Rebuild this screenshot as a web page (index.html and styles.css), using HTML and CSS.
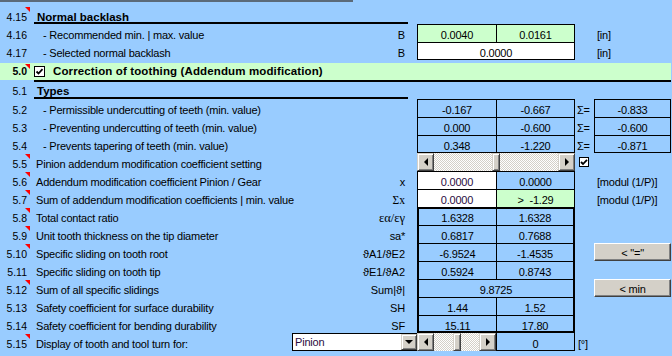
FILE: index.html
```html
<!DOCTYPE html>
<html>
<head>
<meta charset="utf-8">
<link rel="stylesheet" href="styles.css">
</head>
<body>
<div class="sheet">
  <div class="topbar"></div>

  <div class="row hdr">
    <div class="num"><i class="cm"></i>4.15</div>
    <div class="lab ul">Normal backlash</div>
  </div>
  <div class="row">
    <div class="num">4.16</div>
    <div class="lab"><span class="ind">- Recommended min. | max. value</span><span class="sym">B</span></div>
    <div class="c1 v g">0.0040</div>
    <div class="c2 v g r">0.0161</div>
    <div class="c3 unit">[in]</div>
  </div>
  <div class="row">
    <div class="num">4.17</div>
    <div class="lab"><span class="ind">- Selected normal backlash</span><span class="sym">B</span></div>
    <div class="c12 v w r b">0.0000</div>
    <div class="c3 unit">[in]</div>
  </div>

  <div class="row sec">
    <div class="num"><i class="cm"></i>5.0</div>
    <div class="lab full">
      <svg class="chk" width="11" height="11" viewBox="0 0 11 11"><rect x="0.5" y="0.5" width="10" height="10" fill="#fff" stroke="#000"/><path d="M2.5 5.5 L4.5 7.5 L8.5 3.2" fill="none" stroke="#000" stroke-width="1.8"/></svg>
      <span class="sectxt">Correction of toothing (Addendum modification)</span>
    </div>
  </div>
  <div class="row hdr types">
    <div class="num">5.1</div>
    <div class="lab ul">Types</div>
  </div>

  <div class="row">
    <div class="num">5.2</div>
    <div class="lab"><span class="ind">- Permissible undercutting of teeth (min. value)</span></div>
    <div class="c1 v">-0.167</div>
    <div class="c2 v r">-0.667</div>
    <div class="cs sig">Σ=</div>
    <div class="c3 v r">-0.833</div>
  </div>
  <div class="row">
    <div class="num">5.3</div>
    <div class="lab"><span class="ind">- Preventing undercutting of teeth (min. value)</span></div>
    <div class="c1 v">0.000</div>
    <div class="c2 v r">-0.600</div>
    <div class="cs sig">Σ=</div>
    <div class="c3 v r">-0.600</div>
  </div>
  <div class="row">
    <div class="num">5.4</div>
    <div class="lab"><span class="ind">- Prevents tapering of teeth (min. value)</span></div>
    <div class="c1 v b">0.348</div>
    <div class="c2 v r b">-1.220</div>
    <div class="cs sig">Σ=</div>
    <div class="c3 v r b">-0.871</div>
  </div>

  <div class="row">
    <div class="num"><i class="cm"></i>5.5</div>
    <div class="lab"><span>Pinion addendum modification coefficient setting</span></div>
    <div class="c12 sb">
      <div class="sbb"><i class="al"></i></div>
      <div class="trk" style="width:58px"></div>
      <div class="thumb"></div>
      <div class="trk grow"></div>
      <div class="sbb"><i class="ar"></i></div>
    </div>
    <div class="cs cbx">
      <svg width="10" height="10" viewBox="0 0 10 10"><rect x="0.5" y="0.5" width="9" height="9" fill="#fff" stroke="#000"/><path d="M2 5 L4 7 L8 2.8" fill="none" stroke="#000" stroke-width="1.8"/></svg>
    </div>
  </div>

  <div class="row">
    <div class="num"><i class="cm"></i>5.6</div>
    <div class="lab"><span>Addendum modification coefficient Pinion / Gear</span><span class="sym">x</span></div>
    <div class="c1 v w inp">0.0000</div>
    <div class="c2 v r">0.0000</div>
    <div class="c3 unit">[modul (1/P)]</div>
  </div>
  <div class="row">
    <div class="num"><i class="cm"></i>5.7</div>
    <div class="lab"><span>Sum of addendum modification coefficients | min. value</span><span class="sym ser">Σx</span></div>
    <div class="c1 v w inp">0.0000</div>
    <div class="c2 v g r pre">&gt;  -1.29</div>
    <div class="c3 unit">[modul (1/P)]</div>
  </div>

  <div class="row">
    <div class="num"><i class="cm"></i>5.8</div>
    <div class="lab"><span>Total contact ratio</span><span class="sym ser big">εα/εγ</span></div>
    <div class="c1 v tt tl">1.6328</div>
    <div class="c2 v tt tr">1.6328</div>
  </div>
  <div class="row">
    <div class="num"><i class="cm"></i>5.9</div>
    <div class="lab"><span>Unit tooth thickness on the tip diameter</span><span class="sym">sa*</span></div>
    <div class="c1 v tl">0.6817</div>
    <div class="c2 v tr">0.7688</div>
  </div>
  <div class="row">
    <div class="num"><i class="cm"></i>5.10</div>
    <div class="lab"><span>Specific sliding on tooth root</span><span class="sym th">ϑA1/ϑE2</span></div>
    <div class="c1 v tl">-6.9524</div>
    <div class="c2 v tr">-1.4535</div>
    <div class="c3 btn">&lt; "="</div>
  </div>
  <div class="row">
    <div class="num">5.11</div>
    <div class="lab"><span>Specific sliding on tooth tip</span><span class="sym th">ϑE1/ϑA2</span></div>
    <div class="c1 v tl">0.5924</div>
    <div class="c2 v tr">0.8743</div>
  </div>
  <div class="row">
    <div class="num"><i class="cm"></i>5.12</div>
    <div class="lab"><span>Sum of all specific slidings</span><span class="sym th">Sum|ϑ|</span></div>
    <div class="c12 v tl tr">9.8725</div>
    <div class="c3 btn">&lt; min</div>
  </div>
  <div class="row">
    <div class="num">5.13</div>
    <div class="lab"><span>Safety coefficient for surface durability</span><span class="sym">SH</span></div>
    <div class="c1 v tl">1.44</div>
    <div class="c2 v tr">1.52</div>
  </div>
  <div class="row">
    <div class="num">5.14</div>
    <div class="lab"><span>Safety coefficient for bending durability</span><span class="sym">SF</span></div>
    <div class="c1 v tl tb">15.11</div>
    <div class="c2 v tr tb">17.80</div>
  </div>
  <div class="row">
    <div class="num"><i class="cm"></i>5.15</div>
    <div class="lab wide">
      <span class="wtxt">Display of tooth and tool turn for:</span>
      <div class="dd"><span class="ddtxt">Pinion</span><span class="ddbtn"><i class="ad"></i></span></div>
    </div>
    <div class="c1 sb">
      <div class="sbb"><i class="al"></i></div>
      <div class="trk" style="width:19px"></div>
      <div class="thumb"></div>
      <div class="trk grow"></div>
      <div class="sbb"><i class="ar"></i></div>
    </div>
    <div class="c2 v nt r b">0</div>
    <div class="cs unit">[°]</div>
  </div>
</div>
</body>
</html>
```

FILE: styles.css
```css
* { box-sizing: border-box; }
html, body { margin: 0; padding: 0; }
body {
  background: #99ccff;
  font-family: "Liberation Sans", Arial, "DejaVu Sans", sans-serif;
  font-size: 11px;
  letter-spacing: -0.2px;
  color: #000;
  width: 672px;
  height: 356px;
  overflow: hidden;
}
.topbar { width: 353px; height: 2px; background: #5b6a79; margin-bottom: 4px; }

.row {
  display: grid;
  grid-template-columns: 34px 374px 9px 79px 79px 19px 77px;
  height: 18px;
  line-height: 18px;
}
.row > * { padding-top: 2px; height: 18px; white-space: nowrap; }

.num { grid-column: 1; text-align: right; padding-right: 7px; position: relative; letter-spacing: 0; font-size: 10.5px; }
.lab { grid-column: 2; display: flex; justify-content: space-between; padding-left: 2px; padding-right: 3px; }
.c1 { grid-column: 4; }
.c2 { grid-column: 5; }
.c12 { grid-column: 4 / 6; }
.cs { grid-column: 6; }
.c3 { grid-column: 7; }

.ind { padding-left: 7px; }
.sym { text-align: right; }
.ser { font-family: "Liberation Serif", "DejaVu Serif", serif; font-size: 11.5px; letter-spacing: 0; }
.big { font-size: 12.5px; }
.th { letter-spacing: 0; }
.unit { padding-left: 3px; }
.sig { padding-left: 2px; }
.pre { white-space: pre; }

.cm {
  position: absolute; top: 1px; right: 4px;
  width: 0; height: 0;
  border-top: 5px solid #ff0000;
  border-left: 5px solid transparent;
}

.hdr .lab { font-weight: bold; font-size: 11.5px; letter-spacing: 0; padding-left: 3px; }
.ul { border-bottom: 2px solid #000; }

.sec { height: 19px; margin-top: 3px; line-height: 17px; align-items: start; }
.sec > * { padding-top: 0; }
.sec .num { background: #ccffcc; height: 17px; font-weight: bold; }
.sec .full {
  grid-column: 2 / -1; height: 19px; background: #ccffcc;
  border-bottom: 2px solid #000;
  justify-content: flex-start; align-items: center;
  padding-left: 0; font-weight: bold; font-size: 11.5px; letter-spacing: 0.13px;
}
.sec .chk { display: block; margin-top: -1px; }
.sectxt { margin-left: 8px; line-height: 17px; }

.types { height: 17px; line-height: 17px; }
.types > * { height: 17px; padding-top: 1px; }

.v { text-align: center; border-top: 1px solid #000; border-left: 1px solid #000; padding-top: 1px; }
.r { border-right: 1px solid #000; }
.b { border-bottom: 1px solid #000; }
.g { background: #ccffcc; }
.w { background: #ffffff; }
.inp { color: #2a0c3e; }
.nt { border-top: 0; padding-top: 2px; }

.tt { border-top-width: 2px; padding-top: 0; }
.tl { border-left-width: 2px; }
.tr { border-right: 2px solid #000; }
.tb { border-bottom: 2px solid #000; }

.sb { display: flex; padding-top: 0; }
.sbb, .thumb {
  width: 17px; height: 18px;
  background: #d4d0c8;
  border: 1px solid;
  border-color: #d4d0c8 #404040 #404040 #d4d0c8;
  box-shadow: inset 1px 1px #ffffff, inset -1px -1px #808080;
  display: flex; align-items: center; justify-content: center;
}
.thumb { width: 8px; }
.trk {
  height: 18px;
  background: repeating-conic-gradient(#d4d0c8 0 25%, #ffffff 0 50%) 0 0 / 2px 2px;
}
.grow { flex: 1; }
.al { width: 0; height: 0; border-top: 4px solid transparent; border-bottom: 4px solid transparent; border-right: 4px solid #000; }
.ar { width: 0; height: 0; border-top: 4px solid transparent; border-bottom: 4px solid transparent; border-left: 4px solid #000; }
.ad { width: 0; height: 0; border-left: 4px solid transparent; border-right: 4px solid transparent; border-top: 4px solid #000; }

.cbx { padding: 4px 0 0 4px; }
.cbx svg { display: block; }

.wide { grid-column: 2 / 4; padding-top: 0; padding-right: 0; }
.wtxt { padding-top: 2px; }
.dd {
  display: flex; width: 125px; height: 18px;
  background: #fff; border: 1px solid #000; border-right: 0;
  line-height: 16px;
}
.ddtxt { padding-left: 2px; color: #2a0c3e; }
.ddbtn {
  margin-left: auto; width: 16px; height: 16px;
  background: #d4d0c8;
  border: 1px solid; border-color: #d4d0c8 #404040 #404040 #d4d0c8;
  box-shadow: inset 1px 1px #ffffff, inset -1px -1px #808080;
  display: flex; align-items: center; justify-content: center;
}

.btn {
  background: #d4d0c8;
  border: 1px solid; border-color: #ffffff #404040 #404040 #ffffff;
  box-shadow: inset -1px -1px #808080;
  text-align: center; padding-top: 0;
}
```
